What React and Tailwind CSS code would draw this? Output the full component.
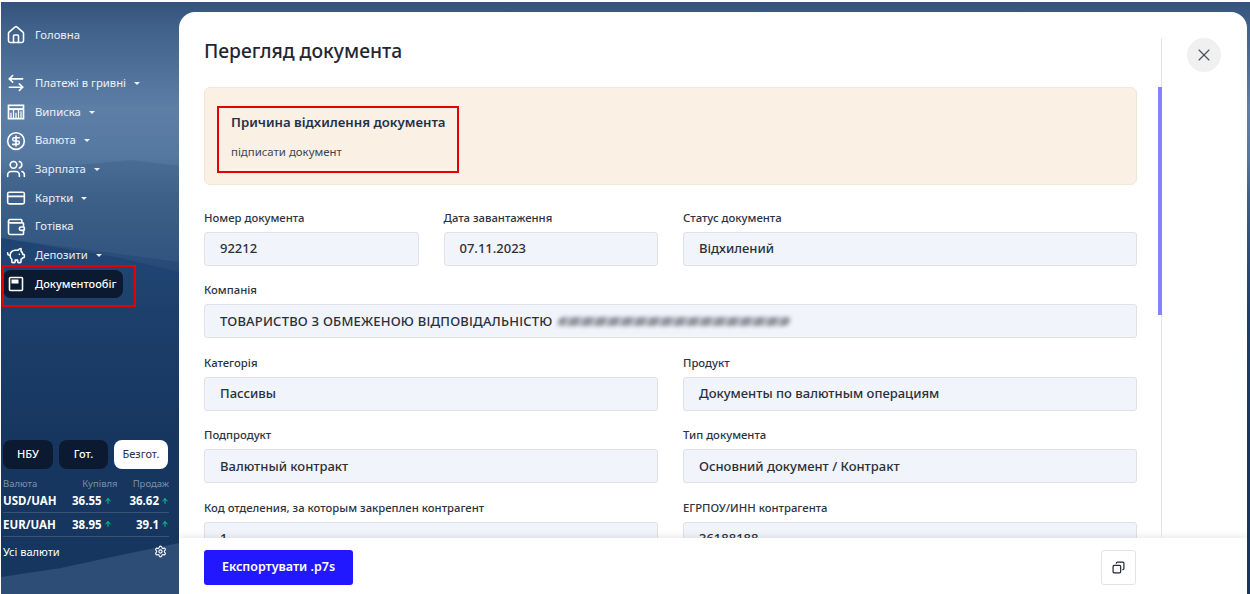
import { Home, ArrowLeftRight, CircleDollarSign, Users, CreditCard, Wallet, PiggyBank, ArrowUp, Settings, X, Copy } from 'lucide-react';

const navItems = [
  { label: 'Платежі в гривні', icon: ArrowLeftRight, caret: true },
  { label: 'Виписка', icon: StatementIcon, caret: true },
  { label: 'Валюта', icon: CircleDollarSign, caret: true },
  { label: 'Зарплата', icon: Users, caret: true },
  { label: 'Картки', icon: CreditCard, caret: true },
  { label: 'Готівка', icon: Wallet },
  { label: 'Депозити', icon: PiggyBank, caret: true },
];

const rates = [
  { pair: 'USD/UAH', buy: '36.55', sell: '36.62' },
  { pair: 'EUR/UAH', buy: '38.95', sell: '39.1' },
];

function StatementIcon(props) {
  return (
    <svg viewBox="0 0 24 24" fill="none" stroke="currentColor" strokeWidth="2" width={props.size} height={props.size} className={props.className}>
      <rect x="3" y="4" width="18" height="16" />
      <path d="M3 8.5h18" strokeWidth="2.4" />
      <path d="M9 8.5V20M15 8.5V20M6 13v7M12 13v7M18 11v9" strokeWidth="1.5" />
    </svg>
  );
}

function DocIcon() {
  return (
    <svg viewBox="0 0 16 16" width="16" height="16" fill="none" className="shrink-0 text-white">
      <rect x="1.5" y="1.5" width="13" height="13" rx="1" stroke="currentColor" strokeWidth="1.6" />
      <rect x="3.5" y="3.5" width="7" height="4" fill="currentColor" />
    </svg>
  );
}

const Caret = () => <span className="ml-2 h-0 w-0 border-x-[3px] border-t-[3px] border-x-transparent border-t-white/90" />;

// one item of the left menu
const NavItem = ({ icon: Icon, label, caret }) => (
  <a className="flex h-[28.7px] items-center pl-[5px] text-[11.3px] text-white/90">
    <Icon size={20} strokeWidth={1.9} className="mr-[9px] shrink-0 text-white" />
    <span>{label}</span>
    {caret && <Caret />}
  </a>
);

const Field = ({ label, value, span = '', children }) => (
  <div className={span}>
    <label className="mb-[5px] block h-[19px] text-[11.3px] leading-[19px] font-medium text-[#2b3340]">{label}</label>
    <div className="flex h-[34px] items-center rounded-[3px] border border-[#dfe1e6] bg-[#f1f4fb] px-[15px] pt-px text-[13px] font-medium text-[#2b3038]">
      {value}
      {children}
    </div>
  </div>
);

const Sidebar = () => (
  <aside className="flex w-[178px] shrink-0 flex-col">
    <nav className="pt-[19px]">
      <NavItem icon={Home} label="Головна" />
      <div className="h-[19.4px]" />
      {navItems.map((item) => (
        <NavItem key={item.label} {...item} />
      ))}
      <a className="mt-[0.6px] ml-0.5 flex h-7 w-[120px] items-center rounded-lg bg-[#0b1a30] pl-[5px] text-[11px] font-medium text-white">
        <DocIcon />
        <span className="ml-[11px]">Документообіг</span>
      </a>
    </nav>

    <div className="mt-auto pr-[10px] pb-[34px] pl-0.5">
      <div className="flex gap-[6px] text-[11px] font-medium">
        <button className="h-[29px] w-[50px] rounded-lg bg-[#0b1a30] text-white">НБУ</button>
        <button className="h-[29px] w-[49px] rounded-lg bg-[#0b1a30] text-white">Гот.</button>
        <button className="h-[29px] w-[54px] rounded-lg bg-white text-[11px] font-normal text-[#22324a]">Безгот.</button>
      </div>
      <div className="mt-[8px] flex justify-between text-[9.5px] leading-[13px] text-white/45">
        <span>Валюта</span>
        <span className="ml-[30px]">Купівля</span>
        <span>Продаж</span>
      </div>
      {rates.map((r) => (
        <div key={r.pair} className="flex h-[23.5px] items-center border-b border-white/15 text-[11.5px] font-bold text-white">
          <span className="w-[69px]">{r.pair}</span>
          <span className="flex w-[44px] items-center">
            {r.buy}
            <ArrowUp size={8} strokeWidth={3} className="ml-0.5 text-emerald-400" />
          </span>
          <span className="ml-auto flex items-center">
            {r.sell}
            <ArrowUp size={8} strokeWidth={3} className="ml-0.5 text-emerald-400" />
          </span>
        </div>
      ))}
      <div className="mt-[7px] flex items-center justify-between pr-0.5 text-[11px] text-white">
        <span>Усі валюти</span>
        <Settings size={13} strokeWidth={2} />
      </div>
    </div>
  </aside>
);

export default function App() {
  return (
    <div className="relative h-[594px] w-[1250px] overflow-hidden bg-white pt-0.5 pl-px font-['Noto_Sans',sans-serif]">
      <div className="relative flex h-full bg-[linear-gradient(180deg,#34527d_0%,#3f6089_4%,#5d7fa6_18%,#5578a0_26%,#3d6088_33%,#2b4e7a_42%,#1c3f6b_52%,#16365f_75%,#163660_100%)]">
        {/* background landscape */}
        <svg className="absolute inset-0 h-full w-full" viewBox="0 0 1249 592" preserveAspectRatio="none">
          <defs>
            <linearGradient id="lower-ridge" x1="0" y1="0" x2="0" y2="1">
              <stop offset="0" stopColor="#1e4270" stopOpacity="0.9" />
              <stop offset="1" stopColor="#1c3f6b" stopOpacity="0" />
            </linearGradient>
          </defs>
          <path d="M0 172 L40 166 L90 162 L130 158 L178 164 V260 L0 236Z" fill="#3f6189" opacity="0.45" />
          <path d="M0 236 L60 246 L120 256 L178 270 L178 360 L0 360Z" fill="url(#lower-ridge)" />
          <path d="M0 575 L60 566 L120 553 L178 541 V592 H0Z" fill="#2d4d77" />
        </svg>

        <div className="relative z-10 flex h-full w-full">
          <Sidebar />

          {/* document modal */}
          <main className="mt-2.5 mr-[3px] flex min-w-0 flex-1 flex-col overflow-hidden rounded-t-2xl bg-white">
            <div className="flex min-h-0 flex-1">
              <div className="w-[982px] shrink-0 overflow-hidden pt-[25px] pr-[24px] pl-[25px]">
                <h1 className="text-[19.3px] leading-[28px] font-medium text-[#1f2733]">Перегляд документа</h1>

                <div className="mt-[22px] h-[98px] rounded-md border border-[#f1e6d8] bg-[#faf0e4] px-[15px] pt-[14px]">
                  <div className="h-[68px] w-[240px] rounded-xl border border-[#fbf4ec] px-[10px] pt-[9px]">
                    <div className="text-[13.2px] leading-[20px] font-semibold whitespace-nowrap text-[#243248]">Причина відхилення документа</div>
                    <div className="mt-[10px] text-[11.4px] leading-[20px] text-[#3d4656]">підписати документ</div>
                  </div>
                </div>

                <div className="mt-[22.5px] grid grid-cols-4 gap-x-[25px] gap-y-[14.5px]">
                  <Field label="Номер документа" value="92212" />
                  <Field label="Дата завантаження" value="07.11.2023" />
                  <Field label="Статус документа" value="Відхилений" span="col-span-2" />
                  <Field label="Компанія" value={<span className="tracking-[0.2px]">ТОВАРИСТВО З ОБМЕЖЕНОЮ ВІДПОВІДАЛЬНІСТЮ</span>} span="col-span-4">
                    <span className="ml-[5px] h-[9px] w-[232px] -skew-x-12 rounded-full bg-[repeating-linear-gradient(100deg,#8f939b_0px,#8f939b_7px,#c9ccd3_10px,#a4a7ae_13px)] blur-[2px]" />
                  </Field>
                  <Field label="Категорія" value="Пассивы" span="col-span-2" />
                  <Field label="Продукт" value="Документы по валютным операциям" span="col-span-2" />
                  <Field label="Подпродукт" value="Валютный контракт" span="col-span-2" />
                  <Field label="Тип документа" value="Основний документ / Контракт" span="col-span-2" />
                  <Field label="Код отделения, за которым закреплен контрагент" value="1" span="col-span-2" />
                  <Field label="ЕГРПОУ/ИНН контрагента" value="36188188" span="col-span-2" />
                </div>
              </div>

              {/* scrollbar track */}
              <div className="relative mt-[26px] w-px bg-[#e4e4e6]">
                <div className="absolute top-[49px] -left-[3px] h-[228px] w-[4px] bg-[#8581ff]" />
              </div>

              <div className="ml-[25px] pt-[26px]">
                <button className="flex h-[34px] w-[34px] items-center justify-center rounded-full bg-[#f0f0f1] text-[#4a4f58]">
                  <X size={20} strokeWidth={1.4} />
                </button>
              </div>
            </div>

            <footer className="flex h-[56px] shrink-0 items-start justify-between bg-white pt-3 pr-[111px] pl-[25px] shadow-[0_-3px_6px_rgba(0,0,0,0.07)]">
              <button className="h-[35px] w-[149px] rounded-[3px] bg-[#2218ff] text-[12.5px] font-semibold text-white">Експортувати .p7s</button>
              <button className="flex h-[35px] w-[35px] items-center justify-center rounded-[3px] border border-[#e2e3e6] bg-white text-[#1f2733]">
                <Copy size={13} strokeWidth={2.2} className="-scale-x-100" />
              </button>
            </footer>
          </main>
        </div>

        {/* red annotation frames drawn over the screenshot */}
        <div className="absolute top-[263px] left-px z-20 h-[42px] w-[134px] border-2 border-[#e60000]" />
        <div className="absolute top-[104px] left-[216px] z-20 h-[67px] w-[242px] border-2 border-[#e60000]" />
      </div>
    </div>
  );
}
